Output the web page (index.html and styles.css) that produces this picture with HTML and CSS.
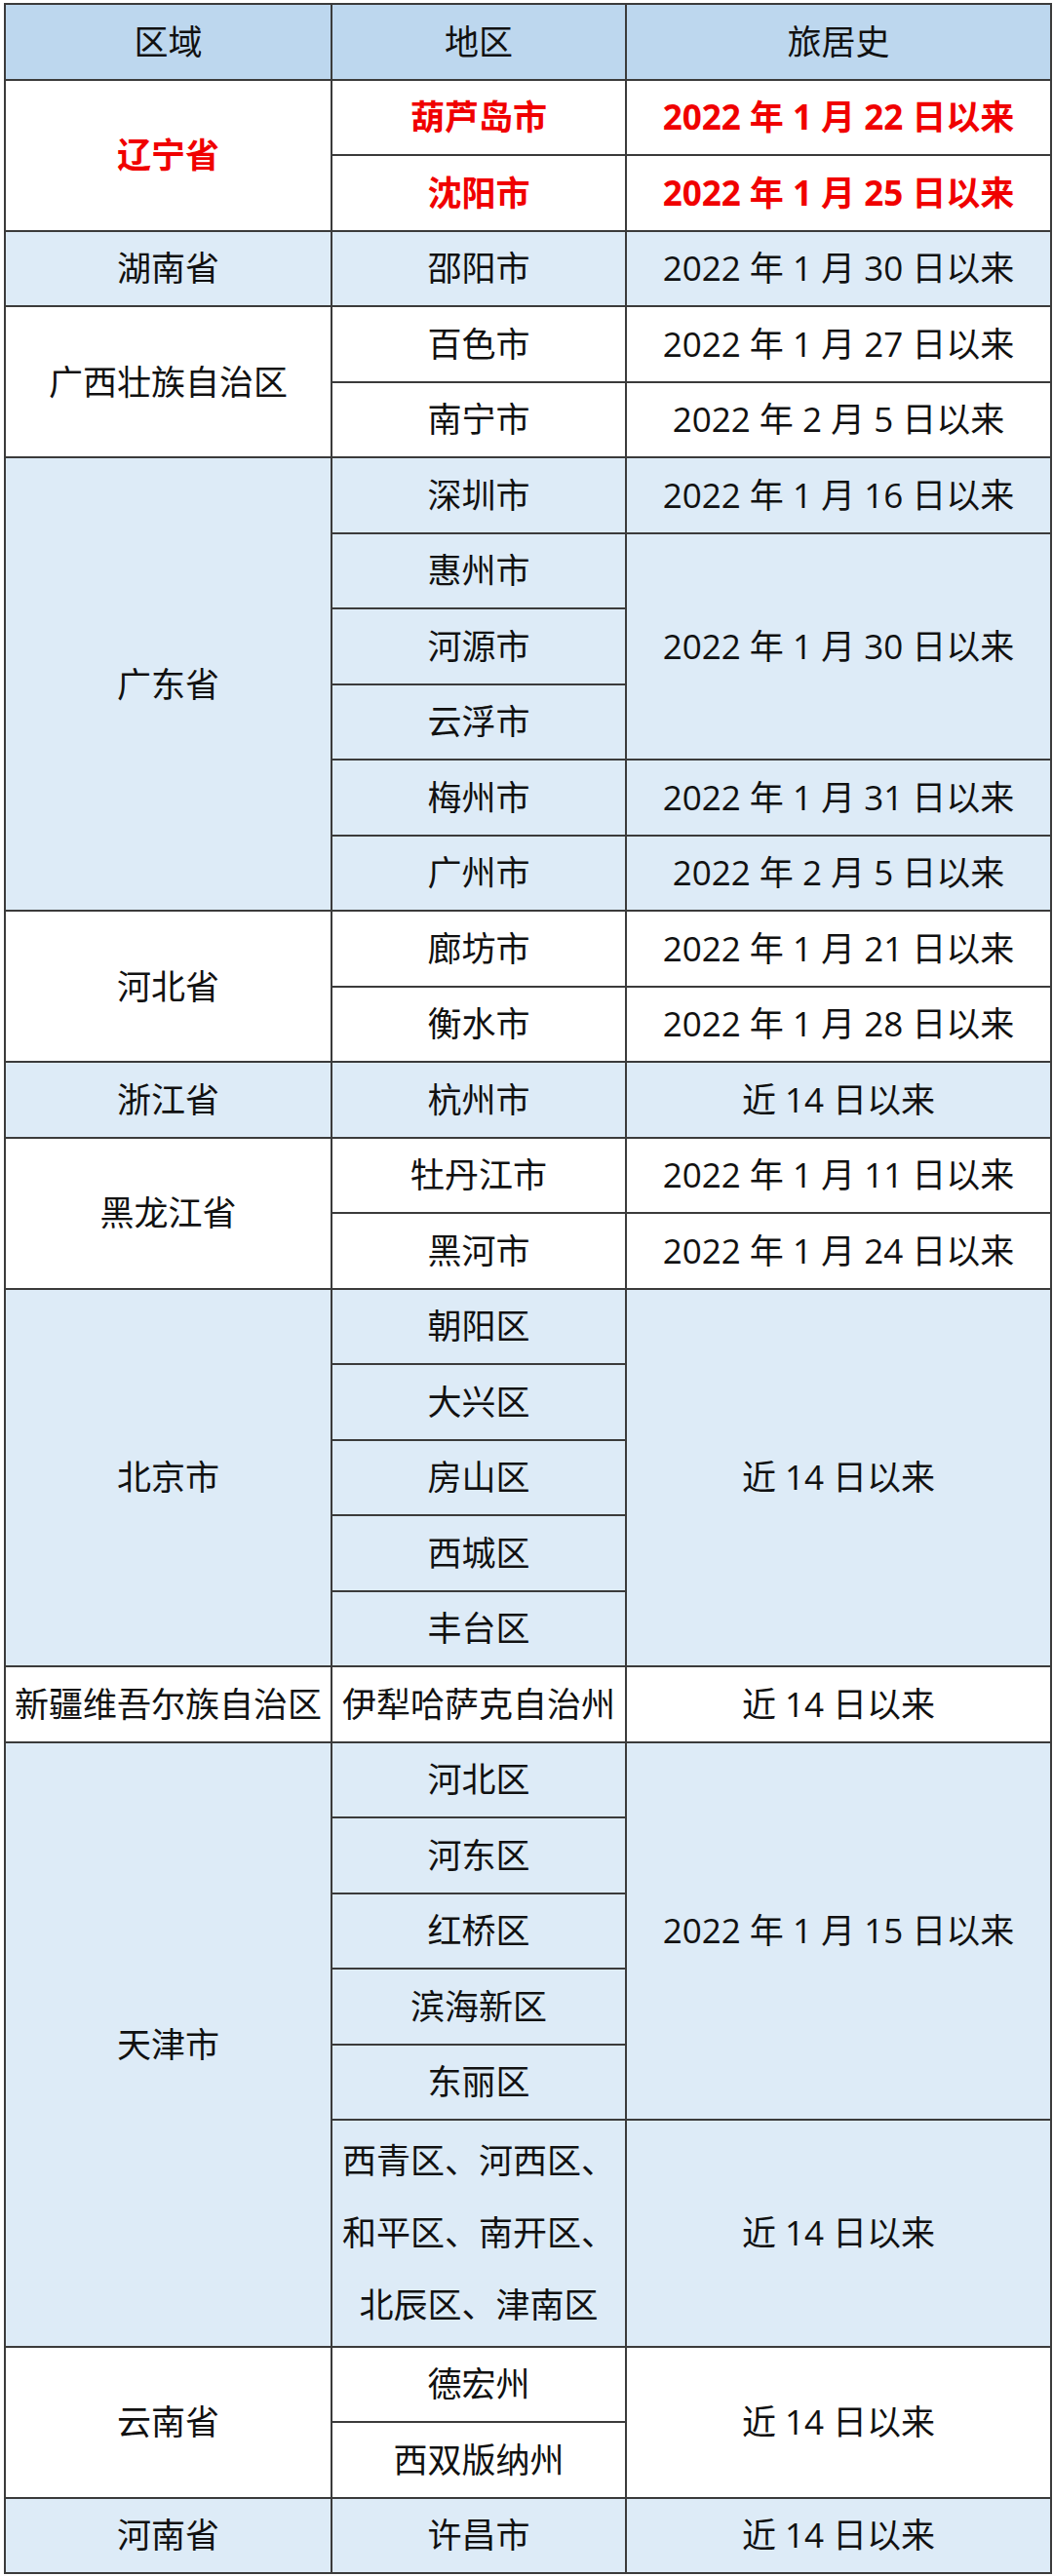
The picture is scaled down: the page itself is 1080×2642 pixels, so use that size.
FILE: index.html
```html
<!DOCTYPE html>
<html lang="zh-CN">
<head>
<meta charset="utf-8">
<title>旅居史</title>
<link rel="stylesheet" href="styles.css">
</head>
<body>
<table class="grid">
  <colgroup>
    <col class="c1"><col class="c2"><col class="c3">
  </colgroup>
  <thead>
    <tr class="hd"><th>区域</th><th>地区</th><th>旅居史</th></tr>
  </thead>
  <tbody class="w red">
    <tr><td rowspan="2">辽宁省</td><td>葫芦岛市</td><td>2022 年 1 月 22 日以来</td></tr>
    <tr><td>沈阳市</td><td>2022 年 1 月 25 日以来</td></tr>
  </tbody>
  <tbody class="b">
    <tr><td>湖南省</td><td>邵阳市</td><td>2022 年 1 月 30 日以来</td></tr>
  </tbody>
  <tbody class="w">
    <tr><td rowspan="2">广西壮族自治区</td><td>百色市</td><td>2022 年 1 月 27 日以来</td></tr>
    <tr><td>南宁市</td><td>2022 年 2 月 5 日以来</td></tr>
  </tbody>
  <tbody class="b">
    <tr><td rowspan="6">广东省</td><td>深圳市</td><td>2022 年 1 月 16 日以来</td></tr>
    <tr><td>惠州市</td><td rowspan="3">2022 年 1 月 30 日以来</td></tr>
    <tr><td>河源市</td></tr>
    <tr><td>云浮市</td></tr>
    <tr><td>梅州市</td><td>2022 年 1 月 31 日以来</td></tr>
    <tr><td>广州市</td><td>2022 年 2 月 5 日以来</td></tr>
  </tbody>
  <tbody class="w">
    <tr><td rowspan="2">河北省</td><td>廊坊市</td><td>2022 年 1 月 21 日以来</td></tr>
    <tr><td>衡水市</td><td>2022 年 1 月 28 日以来</td></tr>
  </tbody>
  <tbody class="b">
    <tr><td>浙江省</td><td>杭州市</td><td>近 14 日以来</td></tr>
  </tbody>
  <tbody class="w">
    <tr><td rowspan="2">黑龙江省</td><td>牡丹江市</td><td>2022 年 1 月 11 日以来</td></tr>
    <tr><td>黑河市</td><td>2022 年 1 月 24 日以来</td></tr>
  </tbody>
  <tbody class="b">
    <tr><td rowspan="5">北京市</td><td>朝阳区</td><td rowspan="5">近 14 日以来</td></tr>
    <tr><td>大兴区</td></tr>
    <tr><td>房山区</td></tr>
    <tr><td>西城区</td></tr>
    <tr><td>丰台区</td></tr>
  </tbody>
  <tbody class="w">
    <tr><td>新疆维吾尔族自治区</td><td>伊犁哈萨克自治州</td><td>近 14 日以来</td></tr>
  </tbody>
  <tbody class="b">
    <tr><td rowspan="6">天津市</td><td>河北区</td><td rowspan="5">2022 年 1 月 15 日以来</td></tr>
    <tr><td>河东区</td></tr>
    <tr><td>红桥区</td></tr>
    <tr><td>滨海新区</td></tr>
    <tr><td>东丽区</td></tr>
    <tr class="tall"><td class="multi">西青区、河西区、和平区、南开区、北辰区、津南区</td><td>近 14 日以来</td></tr>
  </tbody>
  <tbody class="w">
    <tr><td rowspan="2">云南省</td><td>德宏州</td><td rowspan="2">近 14 日以来</td></tr>
    <tr><td>西双版纳州</td></tr>
  </tbody>
  <tbody class="b">
    <tr><td>河南省</td><td>许昌市</td><td>近 14 日以来</td></tr>
  </tbody>
</table>
</body>
</html>
```

FILE: styles.css
```css
html, body {
  margin: 0;
  padding: 0;
  background: #ffffff;
}

body {
  padding: 3px 0 0 4px;
  font-family: "Open Sans", "Noto Sans CJK SC", sans-serif;
  color: #111111;
}

.grid {
  border-collapse: collapse;
  table-layout: fixed;
  width: 1073px;
  font-size: 35px;
}

.c1 { width: 335px; }
.c2 { width: 302px; }
.c3 { width: 436px; }

.grid th,
.grid td {
  border: 2px solid #3b3b3b;
  padding: 0 4px;
  text-align: center;
  vertical-align: middle;
  font-weight: normal;
  white-space: nowrap;
  line-height: 1.2;
}

.grid tr {
  height: 77.5px;
}

.grid tr.tall {
  height: 232.5px;
}

.hd th {
  background: #bdd7ee;
}

.b td {
  background: #ddebf7;
}

.w td {
  background: #ffffff;
}

.red td {
  color: #f00000;
  font-weight: 700;
}

.grid td.multi {
  white-space: normal;
  line-height: 74px;
  padding: 0 6px;
}
```
